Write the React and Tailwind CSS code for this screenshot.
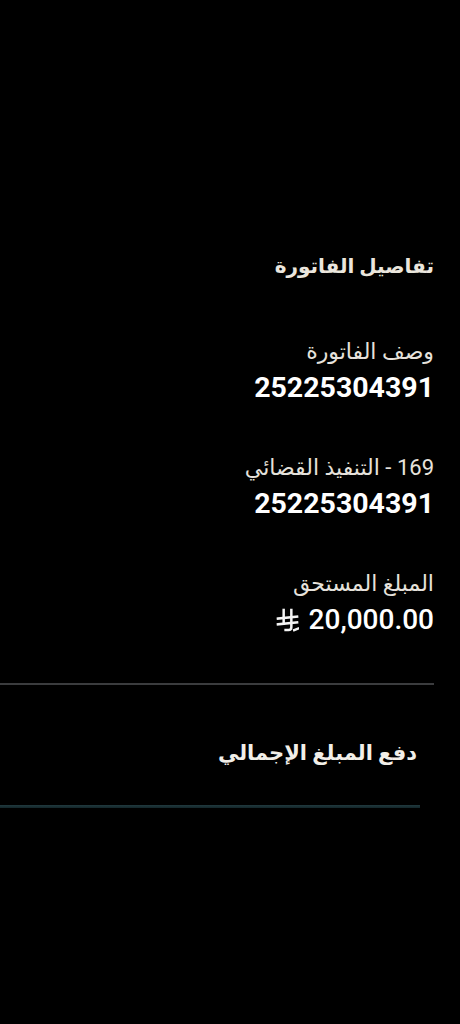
import React from 'react';

const RiyalSign = () => (
  <svg viewBox="0 0 24 26" className="w-[23px] h-[25px]" fill="none" stroke="#f4f4f4" strokeWidth="2.6" strokeLinecap="square">
    <path d="M8 2 V16" />
    <path d="M16 2 V20 Q16 23 13 23 H10" />
    <path d="M2 11 L22 9" />
    <path d="M2 17 L22 15" />
    <path d="M19 23 L23 21.5" />
  </svg>
);

const Field = ({ label, children }) => (
  <div className="flex flex-col items-start">
    <div className="text-[22px] leading-[28px] text-[#e6e2dc]">{label}</div>
    <div className="mt-1 flex items-center gap-[10px] text-[28px] leading-[36px]">{children}</div>
  </div>
);

const App = () => {
  return (
    <div
      dir="rtl"
      className="min-h-[1024px] w-full bg-black text-white"
      style={{ fontFamily: 'Roboto, "DejaVu Sans", sans-serif' }}
    >
      <div className="pt-[252px] pr-[26px]">
        <h1 className="text-[20px] leading-[28px] font-bold text-[#ebe6dd]">تفاصيل الفاتورة</h1>

        <div className="mt-[58px] flex flex-col gap-[48px]">
          <Field label="وصف الفاتورة">
            <span className="font-bold text-[28.5px]">25225304391</span>
          </Field>
          <Field label="169 - التنفيذ القضائي">
            <span className="font-bold text-[28.5px]">25225304391</span>
          </Field>
          <Field label="المبلغ المستحق">
            <span className="font-medium" dir="ltr">20,000.00</span>
            <RiyalSign />
          </Field>
        </div>
      </div>

      <div className="mt-[45px] mr-[26px] h-[2px] bg-[#3b3c3e]" />

      <div className="mt-[52px] pr-[43px] text-[21px] leading-[32px] font-bold text-[#f2efe9]">
        دفع المبلغ الإجمالي
      </div>

      <div className="mt-[36px] mr-[40px] h-[3px] bg-gradient-to-b from-[#21393e] to-[#13262a]" />
    </div>
  );
};

export default App;
